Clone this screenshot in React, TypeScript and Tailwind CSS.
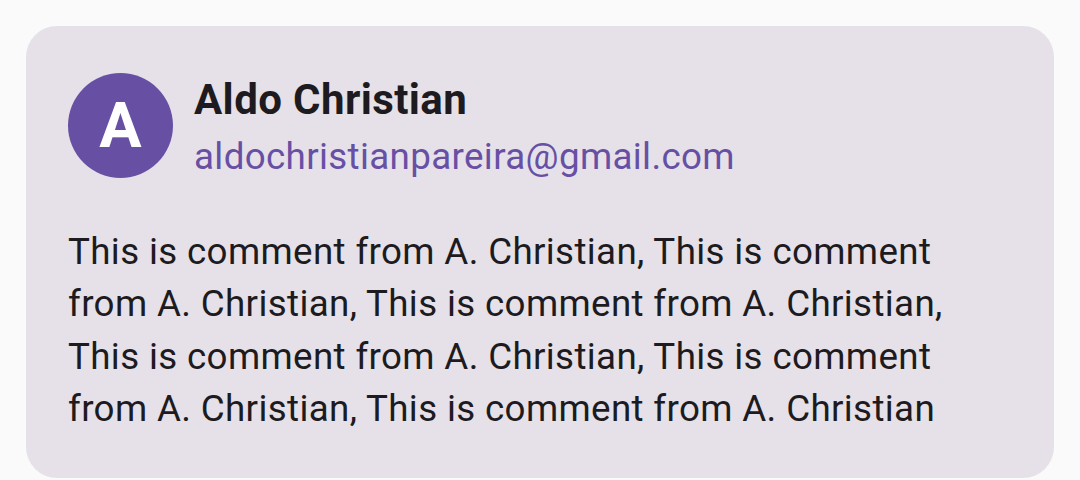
export default function App() {
  return (
    <div
      className="min-h-[480px] w-[1080px] bg-[#fafafa] px-[26px] pt-[26px]"
      style={{ fontFamily: "Roboto, 'Liberation Sans', sans-serif" }}
    >
      <div className="rounded-[31px] bg-[#e6e1e9] p-[42px]">
        {/* Header */}
        <div className="flex items-center gap-[21px]">
          <div className="flex h-[105px] w-[105px] shrink-0 items-center justify-center rounded-full bg-[#6750a4]">
            <span className="text-[63px] font-bold leading-none text-white">A</span>
          </div>
          <div className="flex flex-col">
            <span className="text-[42px] font-bold leading-[63px] tracking-[0.4px] text-[#1d1b20]">
              Aldo Christian
            </span>
            <span className="text-[36.75px] leading-[52.5px] tracking-[0.35px] text-[#6750a4]">
              aldochristianpareira@gmail.com
            </span>
          </div>
        </div>

        {/* Comment */}
        <p className="mt-[42px] max-w-[900px] text-[36.75px] leading-[52.5px] tracking-[0.35px] text-[#1d1b20]">
          This is comment from A. Christian, This is comment from A. Christian,
          This is comment from A. Christian, This is comment from A. Christian,
          This is comment from A. Christian, This is comment from A. Christian
        </p>
      </div>
    </div>
  );
}
